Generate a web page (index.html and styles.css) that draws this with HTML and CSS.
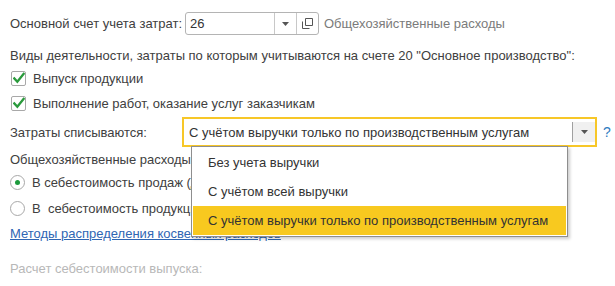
FILE: index.html
```html
<!DOCTYPE html>
<html lang="ru">
<head>
<meta charset="utf-8">
<link rel="stylesheet" href="styles.css">
</head>
<body>
<div class="page">
  <div class="row r1">
    <span class="label">Основной счет учета затрат:</span>
    <div class="field">
      <span class="field-val">26</span>
      <span class="field-btn dd"><svg width="7" height="4" viewBox="0 0 7 4"><path d="M0 0h7L3.5 4z" fill="#555"/></svg></span>
      <span class="field-btn open"><svg width="11" height="11" viewBox="0 0 11 11"><path d="M3.5 0.5h7v7h-7z M0.5 3.5v7h7" fill="none" stroke="#555" stroke-width="1"/></svg></span>
    </div>
    <span class="hint">Общехозяйственные расходы</span>
  </div>
  <div class="row r2">Виды деятельности, затраты по которым учитываются на счете 20 "Основное производство":</div>
  <div class="row check">
    <span class="cb"><svg width="13" height="12" viewBox="0 0 13 12"><path d="M1.5 6.5l3.2 3.5L11.5 1.5" fill="none" stroke="#2a9a3c" stroke-width="2.6" stroke-linecap="square"/></svg></span>
    <span>Выпуск продукции</span>
  </div>
  <div class="row check">
    <span class="cb"><svg width="13" height="12" viewBox="0 0 13 12"><path d="M1.5 6.5l3.2 3.5L11.5 1.5" fill="none" stroke="#2a9a3c" stroke-width="2.6" stroke-linecap="square"/></svg></span>
    <span>Выполнение работ, оказание услуг заказчикам</span>
  </div>
  <div class="row r-sel">
    <span class="label2">Затраты списываются:</span>
    <div class="select">
      <span class="sel-val">С учётом выручки только по производственным услугам</span>
      <span class="sel-btn"><svg width="7" height="4" viewBox="0 0 7 4"><path d="M0 0h7L3.5 4z" fill="#555"/></svg></span>
      <div class="list">
        <div class="item">Без учета выручки</div>
        <div class="item">С учётом всей выручки</div>
        <div class="item active">С учётом выручки только по производственным услугам</div>
      </div>
    </div>
    <span class="q">?</span>
  </div>
  <div class="row r-oh">Общехозяйственные расходы включаются:</div>
  <div class="row radio-row">
    <span class="radio on"></span>
    <span>В себестоимость продаж (директ-костинг)</span>
  </div>
  <div class="row radio-row">
    <span class="radio"></span>
    <span>В&nbsp; себестоимость продукции, работ, услуг</span>
  </div>
  <div class="row r-link"><a class="link" href="#">Методы распределения косвенных расходов</a></div>
  <div class="row r-muted">Расчет себестоимости выпуска:</div>
</div>
</body>
</html>
```

FILE: styles.css
```css
* { box-sizing: border-box; }
html, body { margin: 0; padding: 0; background: #fff; }
body {
  font-family: "Liberation Sans", Arial, sans-serif;
  font-size: 13px;
  color: #404040;
  width: 615px;
  height: 286px;
  overflow: hidden;
}
.page {
  padding: 12px 0 0 10px;
  display: flex;
  flex-direction: column;
}
.row {
  display: flex;
  align-items: center;
  white-space: nowrap;
}
.r1 { height: 23px; }
.label { width: 175px; }
.field {
  display: flex;
  align-items: stretch;
  width: 134px;
  height: 23px;
  border: 1px solid #b4b4b4;
  border-radius: 3px;
  background: #fff;
}
.field-val {
  flex: 1;
  display: flex;
  align-items: center;
  padding-left: 4px;
  color: #333;
}
.field-btn {
  width: 22px;
  display: flex;
  align-items: center;
  justify-content: center;
  border-left: 1px solid #c8c8c8;
}
.hint { margin-left: 5px; color: #7b7b7b; }
.r2 { margin-top: 9px; height: 22px; }
.check { height: 25px; }
.cb {
  width: 15px;
  height: 15px;
  border: 1px solid #a8a8a8;
  border-radius: 2px;
  margin: 0 7px 0 1px;
  display: flex;
  align-items: flex-end;
  justify-content: center;
  background: #fff;
}
.cb svg { margin-bottom: 1px; margin-left: 1px; }
.r-sel { height: 30px; margin-top: 1px; }
.label2 { width: 172px; }
.select {
  position: relative;
  display: flex;
  width: 415px;
  height: 30px;
  border: 2px solid #f7c728;
  background: #fff;
}
.sel-val {
  flex: 1;
  display: flex;
  align-items: center;
  padding-left: 5px;
  color: #333;
}
.sel-btn {
  width: 23px;
  margin: 3px 0;
  background: #f0f0f0;
  border-left: 1px solid #a0a0a0;
  display: flex;
  align-items: center;
  justify-content: center;
}
.q { margin-left: 6px; color: #2f7cc0; font-size: 14px; }
.list {
  position: absolute;
  left: 7px;
  top: 27px;
  width: 377px;
  padding: 1px;
  background: #fff;
  border: 1px solid #8e8e8e;
  box-shadow: 2px 2px 3px rgba(0,0,0,0.2);
  z-index: 5;
}
.item {
  height: 29px;
  display: flex;
  align-items: center;
  padding-left: 15px;
  color: #333;
}
.active { background: #f8c91f; }
.r-oh { margin-top: 2px; height: 20px; }
.radio-row { height: 26px; }
.radio {
  width: 15px;
  height: 15px;
  border: 1px solid #a8a8a8;
  border-radius: 50%;
  margin: 0 7px 0 0;
  display: flex;
  align-items: center;
  justify-content: center;
  background: #fff;
}
.radio.on::after {
  content: "";
  width: 5px;
  height: 5px;
  border-radius: 50%;
  background: #1c9a3c;
}
.r-link { height: 24px; }
.link { color: #2f66b3; text-decoration: underline; }
.r-muted { margin-top: 10px; height: 26px; color: #b8b8b8; }
```
